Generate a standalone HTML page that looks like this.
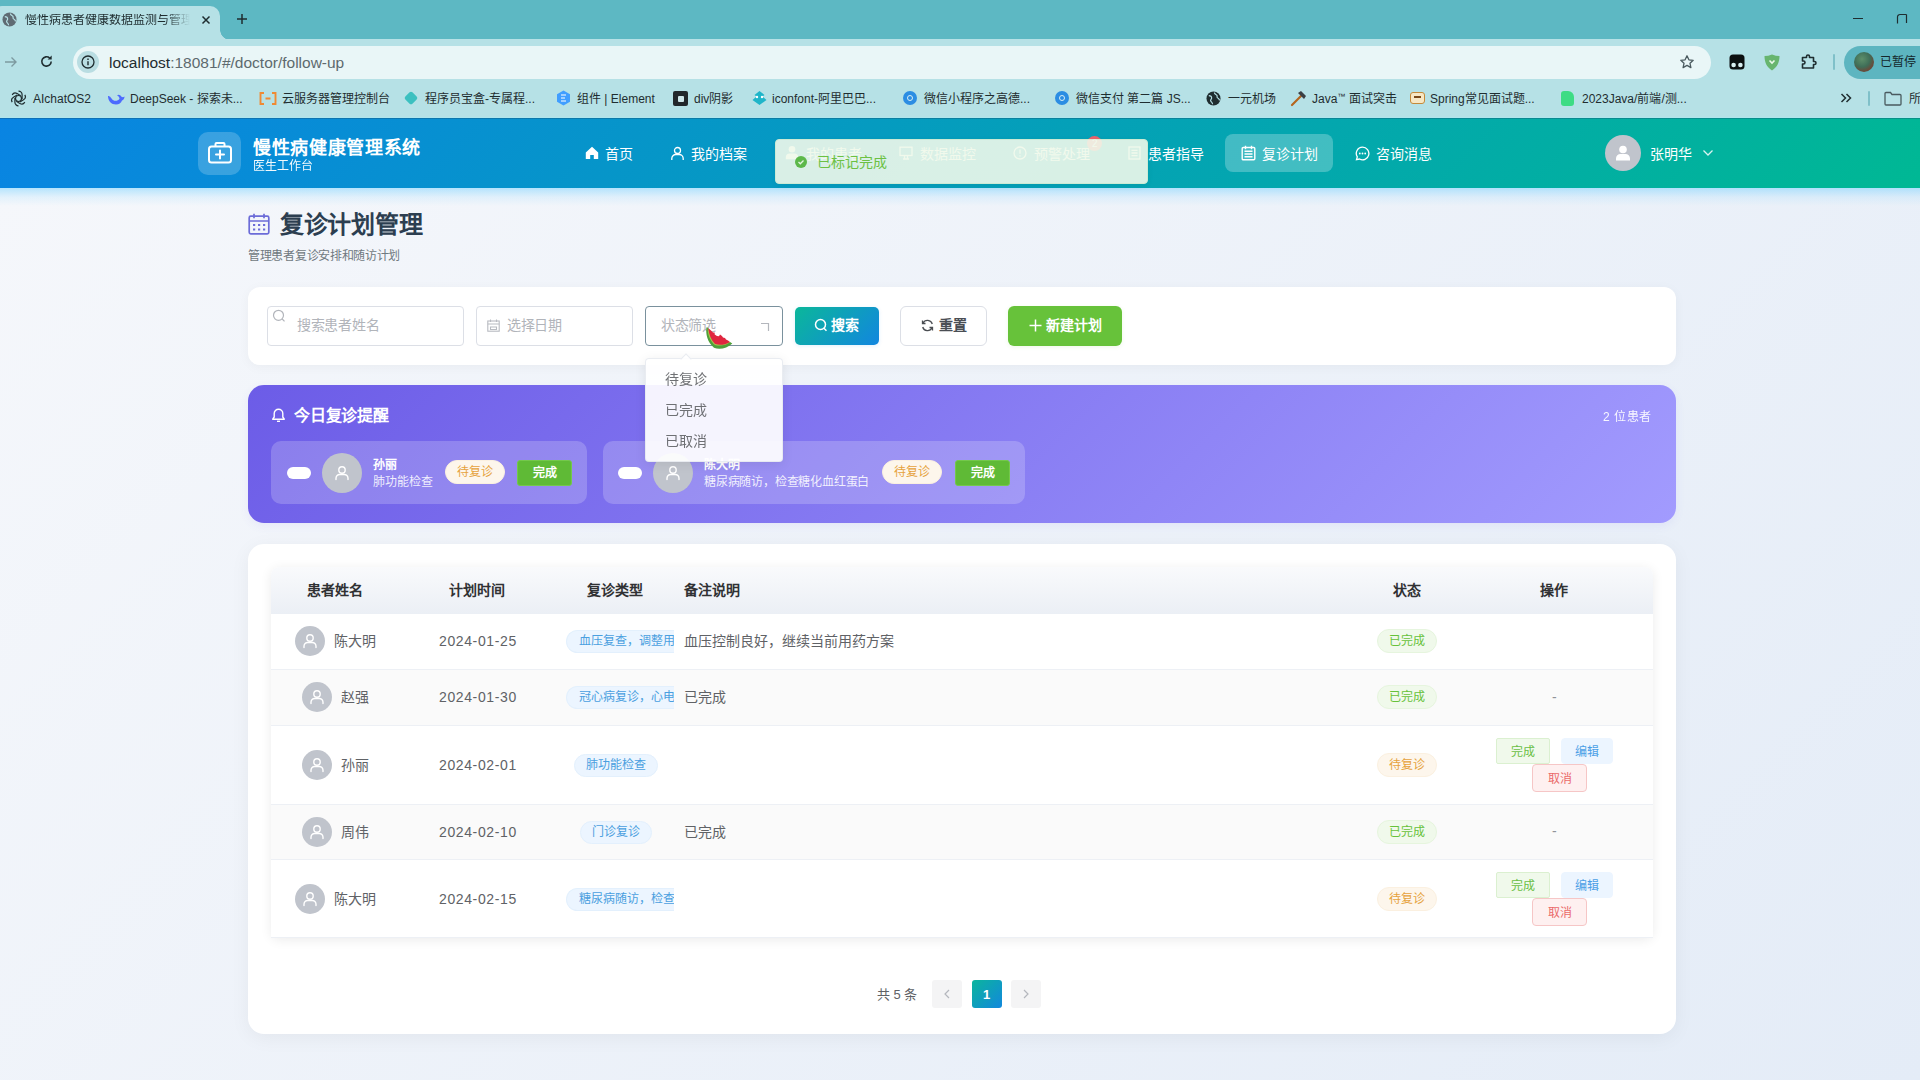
<!DOCTYPE html>
<html lang="zh-CN">
<head>
<meta charset="utf-8">
<title>慢性病患者健康数据监测与管理</title>
<style>
*{box-sizing:border-box;margin:0;padding:0}
html,body{width:1920px;height:1080px;overflow:hidden}
body{font-family:"Liberation Sans",sans-serif;position:relative;background:#eef2f9;color:#303133;font-size:14px}
.abs{position:absolute}
.t{position:absolute;white-space:nowrap;line-height:1}
svg{display:block}
/* browser chrome */
#tabbar{left:0;top:0;width:1920px;height:39px;background:#5db8c3}
#tab{left:-8px;top:6px;width:228px;height:34px;background:#b6e1e6;border-radius:10px 10px 0 0}
#tab:after{content:"";position:absolute;right:-10px;bottom:0;width:10px;height:10px;background:radial-gradient(circle at 100% 0,transparent 9.5px,#b6e1e6 10px)}
#toolbar{left:0;top:39px;width:1920px;height:79px;background:#b6e1e6;border-bottom:1px solid #aee6ee}
#urlbar{left:73px;top:46px;width:1638px;height:33px;border-radius:17px;background:#e9f6f7}
.bm{position:absolute;top:92px;font-size:12px;color:#1f2d30;white-space:nowrap;line-height:15px}
.bmi{position:absolute;top:91px;width:15px;height:15px;border-radius:50%}
/* app header */
#hdr{left:0;top:118px;width:1920px;height:70px;background:linear-gradient(135deg,#0984e3 0%,#00b894 100%);border-top:1px solid rgba(30,70,110,.35)}
.nav{position:absolute;top:147px;font-size:14px;color:#fff;white-space:nowrap;line-height:15px}

/* page */
#pagebg{left:0;top:188px;width:1920px;height:892px;background:linear-gradient(135deg,#f5f7fb 0%,#e4ecf7 100%)}
.card{position:absolute;background:#fff;box-shadow:0 2px 12px rgba(0,0,0,.04)}
.inp{position:absolute;top:306px;height:40px;border:1px solid #dcdfe6;border-radius:4px;background:#fff}
.ph{position:absolute;white-space:nowrap;line-height:16px;top:317px;font-size:14px;color:#b1b4ba}
.btn{position:absolute;white-space:nowrap;text-align:center}
.ritem{position:absolute;top:441px;height:63px;border-radius:10px;background:rgba(255,255,255,.2)}
.pill{position:absolute;width:24px;height:12px;border-radius:6px;background:#fff;top:467px}
.av{position:absolute;border-radius:50%;background:#c0c4cc}
.tag{position:absolute;height:24px;line-height:22px;font-size:12px;border-radius:12px;text-align:center;white-space:nowrap;border:1px solid}
.tag.w{background:#fdf6ec;border-color:#fbf0e0;color:#e6a23c}
.tag.s{background:#f0f9eb;border-color:#e6f5de;color:#67c23a}
.tag.p{background:#ecf5ff;border-color:#e3f0fd;color:#4a9fe0;overflow:hidden;text-align:left;padding-left:12px}
.th{position:absolute;top:582px;width:120px;text-align:center;font-size:14px;font-weight:bold;color:#303133;white-space:nowrap;line-height:16px}
.row{position:absolute;left:271px;width:1382px;border-bottom:1px solid #edf0f5;background:#fff}
.row.alt{background:#fafafa}
.nm{position:absolute;font-size:14px;color:#606266;white-space:nowrap;line-height:16px}
.dt{position:absolute;left:439px;font-size:14px;color:#606266;white-space:nowrap;line-height:16px;letter-spacing:.62px}
.ab{position:absolute;height:26px;line-height:26px;font-size:12px;border-radius:4px;text-align:center;border:1px solid;white-space:nowrap}
.ab.g{background:#f0f9eb;border-color:#dbf0d0;color:#6abf45;width:54px;border-radius:2px}
.ab.b{background:#ecf5ff;border-color:#ecf5ff;color:#4a9fe6;width:52px}
.ab.r{background:#fef0f0;border-color:#f6c6c6;color:#ea6a6a;width:55px}
.opt{position:absolute;left:665px;font-size:14px;color:#606266;white-space:nowrap;line-height:16px}
</style>
</head>
<body>
<div class="abs" id="pagebg"></div>
<div class="abs" style="left:0;top:188px;width:1920px;height:18px;background:linear-gradient(180deg,rgba(120,210,255,.5) 0%,rgba(140,215,255,.18) 50%,rgba(160,220,255,0) 100%)"></div>
<!-- ===== Browser chrome ===== -->
<div class="abs" id="tabbar"></div>
<div class="abs" id="tab"></div>
<div class="abs" id="toolbar"></div>
<div class="abs" id="urlbar"></div>

<!-- tab content -->
<svg class="abs" style="left:2px;top:12px" width="15" height="15" viewBox="0 0 16 16"><circle cx="8" cy="8" r="7.5" fill="#5f6b73"/><path d="M3 5c2 0 3 1 3 2.5S4.5 9 5 10.5 7 12 7 14M9 1.5c0 2 1.500 2 2.500 3S11 7 12.500 7.500 14 9 14.500 10" stroke="#b6e1e6" stroke-width="1.300" fill="none"/></svg>
<div class="t" style="left:25px;top:14px;font-size:12px;color:#1f2d30;width:165px;overflow:hidden;-webkit-mask-image:linear-gradient(90deg,#000 85%,transparent)">慢性病患者健康数据监测与管理系统</div>
<svg class="abs" style="left:201px;top:15px" width="10" height="10" viewBox="0 0 10 10"><path d="M1.500 1.500l7 7M8.500 1.500l-7 7" stroke="#1f2d30" stroke-width="1.500"/></svg>
<svg class="abs" style="left:236px;top:13px" width="12" height="12" viewBox="0 0 12 12"><path d="M6 1v10M1 6h10" stroke="#1f2d30" stroke-width="1.500"/></svg>
<!-- window controls -->
<div class="abs" style="left:1853px;top:18px;width:10px;height:1px;background:#1f2d30"></div>
<svg class="abs" style="left:1896px;top:13px" width="12" height="12" viewBox="0 0 12 12"><path d="M1.500 10.500V4a2.500 2.500 0 0 1 2.500-2.500h6.500M10.500 1.500V10" stroke="#1f2d30" stroke-width="1.200" fill="none"/></svg>
<!-- toolbar icons -->
<svg class="abs" style="left:4px;top:55px" width="14" height="14" viewBox="0 0 14 14"><path d="M1 7h11M7.500 2.500L12 7l-4.500 4.500" stroke="#7d9aa0" stroke-width="1.400" fill="none"/></svg>
<svg class="abs" style="left:39px;top:54px" width="15" height="15" viewBox="0 0 16 16"><path d="M13 8a5 5 0 1 1-1.600-3.700" stroke="#1f2d30" stroke-width="1.700" fill="none"/><path d="M13.500 1.500v4.300H9.200z" fill="#1f2d30"/></svg>
<div class="abs" style="left:77px;top:51px;width:22px;height:22px;border-radius:50%;background:#b9dde2"></div>
<svg class="abs" style="left:81px;top:55px" width="14" height="14" viewBox="0 0 14 14"><circle cx="7" cy="7" r="6" stroke="#1f2d30" stroke-width="1.300" fill="none"/><path d="M7 6.200v4M7 3.600v1.300" stroke="#1f2d30" stroke-width="1.400"/></svg>
<div class="t" id="url" style="left:109px;top:55px;font-size:15.500px;color:#5d6a6e;letter-spacing:0"><span style="color:#1f2d30">localhost</span>:18081/#/doctor/follow-up</div>
<svg class="abs" style="left:1679px;top:54px" width="16" height="16" viewBox="0 0 16 16"><path d="M8 1.800l1.900 4 4.300.500-3.200 3 .900 4.300L8 11.400l-3.900 2.200.900-4.300-3.200-3 4.300-.500z" stroke="#4a5a5f" stroke-width="1.300" fill="none" stroke-linejoin="round"/></svg>
<svg class="abs" style="left:1729px;top:54px" width="16" height="16" viewBox="0 0 16 16"><rect x=".5" y=".5" width="15" height="15" rx="3.500" fill="#0b0f10"/><circle cx="4.600" cy="11" r="2.300" fill="#d8eef0"/><circle cx="11.400" cy="11" r="2.300" fill="#d8eef0"/></svg>
<svg class="abs" style="left:1764px;top:54px" width="16" height="17" viewBox="0 0 16 17"><path d="M8 .5c2.500 1 5 1.500 7.500 1.500 0 6-2 11-7.500 14.500C2.500 13 .5 8 .5 2 3 2 5.500 1.500 8 .5z" fill="#67b56f"/><path d="M5.500 6.500L8 9l2.500-2.500" stroke="#e9f8ea" stroke-width="1.600" fill="none"/></svg>
<svg class="abs" style="left:1800px;top:53px" width="17" height="17" viewBox="0 0 17 17"><path d="M2.500 4.500h4v-1a1.500 1.500 0 0 1 3 0v1h4v4h1a1.500 1.500 0 0 1 0 3h-1v3.500h-11V11h1a1.500 1.500 0 0 0 0-3h-1z" stroke="#1f2d30" stroke-width="1.600" fill="none" stroke-linejoin="round"/></svg>
<div class="abs" style="left:1833px;top:54px;width:2px;height:16px;background:#7fc0c9;border-radius:1px"></div>
<div class="abs" style="left:1844px;top:46px;width:100px;height:33px;border-radius:17px;background:#5db5c0"></div>
<div class="abs" style="left:1854px;top:52px;width:20px;height:20px;border-radius:50%;background:radial-gradient(circle at 40% 35%,#5d8f6a 0,#3f6e58 45%,#6a4a3a 70%,#2f5d55 100%)"></div>
<div class="t" style="left:1880px;top:56px;font-size:12px;color:#14282c">已暂停</div>
<!-- bookmarks -->
<svg class="abs" style="left:10px;top:90px" width="17" height="17" viewBox="0 0 17 17"><g fill="none" stroke="#1f2d30" stroke-width="1.200"><circle cx="8.500" cy="8.500" r="3"/><path d="M8.500 1.200a3.600 3.600 0 0 1 3.600 3.600v4.200M14.800 4.900a3.600 3.600 0 0 1-1.300 4.900l-3.600 2.100M14.800 12.100a3.600 3.600 0 0 1-4.900 1.300L6.300 11.300M8.500 15.800a3.600 3.600 0 0 1-3.600-3.600V8M2.200 12.100a3.600 3.600 0 0 1 1.300-4.900l3.600-2.100M2.200 4.900a3.600 3.600 0 0 1 4.900-1.300l3.600 2.100"/></g></svg>
<div class="bm" style="left:33px">AIchatOS2</div>
<svg class="abs" style="left:107px;top:91px" width="18" height="15" viewBox="0 0 18 15"><path d="M1 5c0 5 3.500 8.500 8 8.500 3 0 5-1.500 6-4 1.500-.5 2.500-2 2.500-4-1 .800-2 .800-3 .300-1-2-3-2.500-4.500-1.500 1.500.700 2.500 2 2.500 3.500C11 10 8 10.500 6 9 4 7.500 3.500 5 1 5z" fill="#4d6bfe"/></svg>
<div class="bm" style="left:130px">DeepSeek - 探索未...</div>
<svg class="abs" style="left:259px;top:92px" width="18" height="13" viewBox="0 0 18 13"><path d="M5 1H1.500v11H5M13 1h3.500v11H13M6.500 6.500h5" stroke="#f08a33" stroke-width="1.900" fill="none"/></svg>
<div class="bm" style="left:282px">云服务器管理控制台</div>
<div class="abs" style="left:406px;top:93px;width:10px;height:10px;background:#3cc0c0;transform:rotate(45deg);border-radius:2px"></div>
<div class="bm" style="left:425px">程序员宝盒-专属程...</div>
<svg class="abs" style="left:556px;top:90px" width="15" height="16" viewBox="0 0 15 16"><path d="M7.500 .5l6.500 3.700v7.600L7.500 15.500 1 11.800V4.200z" fill="#409eff"/><path d="M5 5h5M5 8h4M5 11h5" stroke="#fff" stroke-width="1.200"/></svg>
<div class="bm" style="left:577px">组件 | Element</div>
<div class="abs" style="left:673px;top:91px;width:15px;height:15px;background:#22272b;border-radius:2px"></div>
<div class="abs" style="left:678px;top:96px;width:6px;height:6px;background:#cfe6e9;border-radius:1px"></div>
<div class="bm" style="left:694px">div阴影</div>
<svg class="abs" style="left:751px;top:90px" width="17" height="16" viewBox="0 0 17 16"><path d="M8.500 1l5 4-2 1.500 4 3.500-7 5-7-5 4-3.500L3.500 5z" fill="#1fb5c9"/><circle cx="6" cy="7" r="1.200" fill="#fff"/><circle cx="11" cy="7" r="1.200" fill="#fff"/></svg>
<div class="bm" style="left:772px">iconfont-阿里巴巴...</div>
<div class="abs" style="left:903px;top:91px;width:14px;height:14px;border-radius:50%;background:#2b8de3"></div>
<div class="abs" style="left:907px;top:95px;width:6px;height:6px;border-radius:50%;border:1.500px solid #d8eef5"></div>
<div class="bm" style="left:924px">微信小程序之高德...</div>
<div class="abs" style="left:1055px;top:91px;width:14px;height:14px;border-radius:50%;background:#2b8de3"></div>
<div class="abs" style="left:1059px;top:95px;width:6px;height:6px;border-radius:50%;border:1.500px solid #d8eef5"></div>
<div class="bm" style="left:1076px">微信支付 第二篇 JS...</div>
<svg class="abs" style="left:1206px;top:91px" width="15" height="15" viewBox="0 0 16 16"><circle cx="8" cy="8" r="7.500" fill="#1f2d30"/><path d="M3 5c2 0 3 1 3 2.500S4.500 9 5 10.500 7 12 7 14M9 1.500c0 2 1.500 2 2.500 3S11 7 12.500 7.500 14 9 14.500 10" stroke="#b6e1e6" stroke-width="1.300" fill="none"/></svg>
<div class="bm" style="left:1228px">一元机场</div>
<svg class="abs" style="left:1290px;top:90px" width="17" height="17" viewBox="0 0 17 17"><path d="M2 15L11 6" stroke="#b5651d" stroke-width="2.200" stroke-linecap="round"/><path d="M8 3l3-2 5 5-2 3z" fill="#3a3f44"/></svg>
<div class="bm" style="left:1312px">Java<span style="font-size:8px;position:relative;top:-4px">™</span> 面试突击</div>
<div class="abs" style="left:1410px;top:92px;width:15px;height:12px;border-radius:3px;background:#f7e7c4;border:1.500px solid #c48a3a"></div>
<div class="abs" style="left:1414px;top:96px;width:7px;height:2px;background:#7a4a1a"></div>
<div class="bm" style="left:1430px">Spring常见面试题...</div>
<div class="abs" style="left:1561px;top:91px;width:13px;height:15px;border-radius:3px 6px 3px 3px;background:#3ddc84"></div>
<div class="bm" style="left:1582px">2023Java/前端/测...</div>
<svg class="abs" style="left:1840px;top:93px" width="12" height="10" viewBox="0 0 12 10"><path d="M1.500 1l4 4-4 4M6.500 1l4 4-4 4" stroke="#1f2d30" stroke-width="1.500" fill="none"/></svg>
<div class="abs" style="left:1868px;top:91px;width:2px;height:15px;background:#7fc0c9;border-radius:1px"></div>
<svg class="abs" style="left:1884px;top:91px" width="18" height="15" viewBox="0 0 18 15"><path d="M1 2.500a1 1 0 0 1 1-1h4.500l1.500 2H16a1 1 0 0 1 1 1V13a1 1 0 0 1-1 1H2a1 1 0 0 1-1-1z" stroke="#4a5a5f" stroke-width="1.300" fill="none"/></svg>
<div class="bm" style="left:1909px">所</div>
<!-- ===== App header ===== -->
<div class="abs" id="hdr"></div>

<!-- logo -->
<div class="abs" style="left:198px;top:131.500px;width:43px;height:43px;border-radius:10px;background:rgba(255,255,255,.2)"></div>
<svg class="abs" style="left:207px;top:141px" width="26" height="24" viewBox="0 0 26 24"><g fill="none" stroke="#fff" stroke-width="2" stroke-linejoin="round"><rect x="2" y="5.500" width="22" height="16" rx="2.500"/><path d="M8.500 5.500V3a1 1 0 0 1 1-1h7a1 1 0 0 1 1 1v2.500"/><path d="M13 9.500v8M9 13.500h8" stroke-linecap="round"/></g></svg>
<div class="t" style="left:253px;top:139px;font-size:18px;font-weight:bold;color:#fff;letter-spacing:.65px">慢性病健康管理系统</div>
<div class="t" style="left:253px;top:160px;font-size:12px;color:#fff;opacity:.95">医生工作台</div>
<!-- nav -->
<svg class="abs" style="left:585px;top:146px" width="14" height="14" viewBox="0 0 14 14"><path d="M7 .8L.8 6.500V13h4.400V9h3.600v4h4.400V6.500z" fill="#fff"/></svg>
<div class="nav" style="left:605px">首页</div>
<svg class="abs" style="left:670px;top:146px" width="15" height="15" viewBox="0 0 15 15"><g fill="none" stroke="#fff" stroke-width="1.300"><circle cx="7.500" cy="4.500" r="3"/><path d="M1.800 14v-1.500a4 4 0 0 1 4-4h3.400a4 4 0 0 1 4 4V14"/></g></svg>
<div class="nav" style="left:691px">我的档案</div>
<svg class="abs" style="left:785px;top:145px" width="14" height="15" viewBox="0 0 14 15"><g fill="#fff"><circle cx="7" cy="4.300" r="3.300"/><path d="M.8 14.200v-1.700a4 4 0 0 1 4-4h4.400a4 4 0 0 1 4 4v1.700z"/></g></svg>
<div class="nav" style="left:806px">我的患者</div>
<svg class="abs" style="left:899px;top:146px" width="14" height="14" viewBox="0 0 14 14"><g fill="none" stroke="#fff" stroke-width="1.300"><rect x="1" y="1.200" width="12" height="8.300"/><path d="M4 13h6M5.500 9.500V13M8.500 9.500V13"/></g></svg>
<div class="nav" style="left:920px">数据监控</div>
<svg class="abs" style="left:1013px;top:146px" width="14" height="14" viewBox="0 0 14 14"><g fill="none" stroke="#fff" stroke-width="1.300"><circle cx="7" cy="7" r="6"/><path d="M7 3.500v4.300M7 9.300v1.300"/></g></svg>
<div class="nav" style="left:1034px">预警处理</div>
<div class="abs" style="left:1087px;top:136px;width:15px;height:15px;border-radius:8px;background:#e9626a"></div>
<div class="t" style="left:1092px;top:139px;font-size:10px;color:#fff">2</div>
<svg class="abs" style="left:1128px;top:146px" width="13" height="14" viewBox="0 0 13 14"><g fill="none" stroke="#fff" stroke-width="1.300"><rect x="1" y="1" width="11" height="12"/><path d="M3.500 4.300h6M3.500 7h6M3.500 9.700h6"/></g></svg>
<div class="nav" style="left:1148px">患者指导</div>
<div class="abs" style="left:1225px;top:134px;width:108px;height:38px;border-radius:8px;background:rgba(255,255,255,.25)"></div>
<svg class="abs" style="left:1241px;top:145px" width="15" height="16" viewBox="0 0 15 16"><g fill="none" stroke="#fff" stroke-width="1.400"><rect x="1.200" y="2.500" width="12.600" height="12.300" rx="1"/><path d="M4.500 .8v3.400M10.500 .8v3.400M3.500 6.300h8M3.500 9h8M3.500 11.700h8"/></g></svg>
<div class="nav" style="left:1262px">复诊计划</div>
<svg class="abs" style="left:1355px;top:146px" width="15" height="15" viewBox="0 0 15 15"><g fill="none" stroke="#fff" stroke-width="1.300"><path d="M7.500 1.200a6.300 6.300 0 1 1-3 11.800L1.500 13.700l.8-2.800A6.300 6.300 0 0 1 7.500 1.200z"/></g><g fill="#fff"><circle cx="4.800" cy="7.500" r=".9"/><circle cx="7.500" cy="7.500" r=".9"/><circle cx="10.200" cy="7.500" r=".9"/></g></svg>
<div class="nav" style="left:1376px">咨询消息</div>
<!-- user -->
<div class="abs" style="left:1605px;top:135px;width:36px;height:36px;border-radius:50%;background:#c0c4cc"></div>
<svg class="abs" style="left:1614px;top:144px" width="18" height="18" viewBox="0 0 18 18"><g fill="#fff"><circle cx="9" cy="5.500" r="3.800"/><path d="M2 16.500v-2a4.500 4.500 0 0 1 4.500-4.500h5a4.500 4.500 0 0 1 4.500 4.500v2z"/></g></svg>
<div class="nav" style="left:1650px">张明华</div>
<svg class="abs" style="left:1702px;top:149px" width="12" height="8" viewBox="0 0 12 8"><path d="M1.500 1.500L6 6l4.500-4.500" stroke="#fff" stroke-width="1.300" fill="none" opacity=".85"/></svg>
<!-- toast -->
<div class="abs" style="left:775px;top:139px;width:373px;height:45px;border-radius:4px;background:#f0f9eb;border:1px solid #e1f3d8;opacity:.9;box-shadow:0 2px 8px rgba(0,0,0,.06)"></div>
<div class="abs" style="left:795px;top:156px;width:12px;height:12px;border-radius:50%;background:#5cb84a"></div>
<svg class="abs" style="left:797px;top:158px" width="8" height="8" viewBox="0 0 8 8"><path d="M1.500 4l1.800 1.800L6.500 2.500" stroke="#e4f5e2" stroke-width="1.300" fill="none"/></svg>
<div class="t" style="left:817px;top:155px;font-size:14px;color:#6cc143">已标记完成</div>
<!-- ===== Page ===== -->
<svg class="abs" style="left:248px;top:213px" width="22" height="22" viewBox="0 0 22 22"><g fill="none" stroke="#6c6cd8" stroke-width="1.700"><rect x="1.200" y="3.200" width="19.600" height="17.600" rx="1.500"/><path d="M1.200 8h19.600M6 .8v4.400M16 .8v4.400"/></g><g fill="#6c6cd8"><rect x="5" y="11" width="2.200" height="2"/><rect x="10" y="11" width="2.200" height="2"/><rect x="15" y="11" width="2.200" height="2"/><rect x="5" y="15.500" width="2.200" height="2"/><rect x="10" y="15.500" width="2.200" height="2"/><rect x="15" y="15.500" width="2.200" height="2"/></g></svg>
<div class="t" style="left:280px;top:213px;font-size:24px;font-weight:bold;color:#2c3e50;letter-spacing:-.3px">复诊计划管理</div>
<div class="t" style="left:248px;top:250px;font-size:12px;color:#707980;letter-spacing:-.3px">管理患者复诊安排和随访计划</div>
<div class="card" style="left:248px;top:287px;width:1428px;height:78px;border-radius:12px"></div>
<div class="inp" style="left:267px;width:197px"></div>
<svg class="abs" style="left:272px;top:309px" width="14" height="14" viewBox="0 0 14 14"><g fill="none" stroke="#b2b5bb" stroke-width="1.200"><circle cx="6.500" cy="6.300" r="5"/><path d="M10.200 10l2.300 2.300"/></g></svg>
<div class="ph" style="left:297px;letter-spacing:-.3px">搜索患者姓名</div>
<div class="inp" style="left:476px;width:157px"></div>
<svg class="abs" style="left:487px;top:319px" width="13" height="13" viewBox="0 0 13 13"><g fill="none" stroke="#b8bbc1" stroke-width="1.100"><rect x=".8" y="2" width="11.400" height="10.200"/><path d="M.8 5h11.400M3.500 .5v2.500M9.500 .5v2.500M3.500 8h6v2.500h-6z"/></g></svg>
<div class="ph" style="left:507px;letter-spacing:-.4px">选择日期</div>
<div class="inp" style="left:645px;width:138px;border-color:#7a919d"></div>
<div class="ph" style="left:661px;letter-spacing:-.4px">状态筛选</div>
<svg class="abs" style="left:760px;top:322px" width="10" height="10" viewBox="0 0 10 10"><path d="M1 1.500h7.500V9" stroke="#b4b7bd" stroke-width="1.200" fill="none"/></svg>
<div class="btn" style="left:795px;top:307px;width:84px;height:38px;border-radius:5px;background:linear-gradient(135deg,#0bb79a 0%,#1286df 100%);box-shadow:0 1px 4px rgba(9,132,227,.12)"></div>
<svg class="abs" style="left:814px;top:318px" width="14" height="14" viewBox="0 0 14 14"><g fill="none" stroke="#fff" stroke-width="1.500"><circle cx="6.500" cy="6.500" r="5"/><path d="M10 10.200l2.500 2.500"/></g></svg>
<div class="t" style="left:831px;top:318px;font-size:14px;font-weight:bold;color:#fff">搜索</div>
<div class="btn" style="left:900px;top:306px;width:87px;height:40px;border-radius:6px;border:1px solid #dcdfe6;background:#fff"></div>
<svg class="abs" style="left:921px;top:319px" width="13" height="13" viewBox="0 0 13 13"><g fill="none" stroke="#4a4d52" stroke-width="1.300"><path d="M11.300 5a5 5 0 0 0-9.300-.8M1.700 8a5 5 0 0 0 9.300.8"/><path d="M1.500 1.500v3h3M11.500 11.500v-3h-3"/></g></svg>
<div class="t" style="left:939px;top:318px;font-size:14px;font-weight:bold;color:#4a4e54">重置</div>
<div class="btn" style="left:1008px;top:306px;width:114px;height:40px;border-radius:6px;background:#67c23a;box-shadow:0 1px 4px rgba(103,194,58,.12)"></div>
<svg class="abs" style="left:1029px;top:319px" width="13" height="13" viewBox="0 0 13 13"><path d="M6.500 .5v12M.5 6.500h12" stroke="#fff" stroke-width="1.500"/></svg>
<div class="t" style="left:1046px;top:318px;font-size:14px;font-weight:bold;color:#fff">新建计划</div>
<div class="abs" style="left:248px;top:385px;width:1428px;height:138px;border-radius:16px;background:linear-gradient(135deg,#6c5ce7 0%,#a29bfe 100%);box-shadow:0 3px 10px rgba(108,92,231,.08)"></div>
<svg class="abs" style="left:271px;top:408px" width="15" height="15" viewBox="0 0 15 15"><g fill="none" stroke="#fff" stroke-width="1.400" stroke-linejoin="round"><path d="M7.500 1.200a4.300 4.300 0 0 1 4.300 4.300v3.500l1.500 2.200H1.700l1.500-2.200V5.500a4.300 4.300 0 0 1 4.300-4.300z"/><path d="M6 13.300h3"/></g></svg>
<div class="t" style="left:294px;top:408px;font-size:16px;font-weight:bold;color:#fff;letter-spacing:-.2px">今日复诊提醒</div>
<div class="t" style="left:1603px;top:411px;font-size:12px;color:#fff;opacity:.92;letter-spacing:.5px">2 位患者</div>
<div class="ritem" style="left:271px;width:316px"></div>
<div class="pill" style="left:287px"></div>
<div class="av" style="left:322px;top:452.5px;width:40px;height:40px"></div><svg class="abs" style="left:334.0px;top:464.5px" width="16" height="16" viewBox="0 0 16 16"><g fill="none" stroke="#fff" stroke-width="1.400" stroke-linecap="round"><circle cx="8" cy="5" r="3.200"/><path d="M2 14.500v-1.300a3.700 3.700 0 0 1 3.700-3.700h4.600a3.700 3.700 0 0 1 3.700 3.700v1.300"/></g></svg>
<div class="t" style="left:373px;top:459px;font-size:12px;font-weight:bold;color:#fff">孙丽</div>
<div class="t" style="left:373px;top:476px;font-size:12px;color:rgba(255,255,255,.88)">肺功能检查</div>
<div class="tag w" style="left:445px;top:460px;width:60px">待复诊</div>
<div class="btn" style="left:517px;top:459.500px;width:55px;height:26px;line-height:24px;border-radius:3px;background:#5fba36;border:1px solid #74c84c;font-size:12px;font-weight:bold;color:#fff">完成</div>
<div class="ritem" style="left:603px;width:422px"></div>
<div class="pill" style="left:618px"></div>
<div class="av" style="left:653px;top:452.5px;width:40px;height:40px"></div><svg class="abs" style="left:665.0px;top:464.5px" width="16" height="16" viewBox="0 0 16 16"><g fill="none" stroke="#fff" stroke-width="1.400" stroke-linecap="round"><circle cx="8" cy="5" r="3.200"/><path d="M2 14.500v-1.300a3.700 3.700 0 0 1 3.700-3.700h4.600a3.700 3.700 0 0 1 3.700 3.700v1.300"/></g></svg>
<div class="t" style="left:704px;top:459px;font-size:12px;font-weight:bold;color:#fff">陈大明</div>
<div class="t" style="left:704px;top:476px;font-size:12px;color:rgba(255,255,255,.88);letter-spacing:-.2px">糖尿病随访，检查糖化血红蛋白</div>
<div class="tag w" style="left:882px;top:460px;width:60px">待复诊</div>
<div class="btn" style="left:955px;top:459.500px;width:55px;height:26px;line-height:24px;border-radius:3px;background:#5fba36;border:1px solid #74c84c;font-size:12px;font-weight:bold;color:#fff">完成</div>
<div class="card" style="left:248px;top:544px;width:1428px;height:490px;border-radius:16px;box-shadow:0 4px 20px rgba(0,0,0,.05)"></div>
<div class="abs" style="left:271px;top:567px;width:1382px;height:371px;border-radius:8px;box-shadow:0 2px 12px rgba(0,0,0,.08);background:#fff"></div>
<div class="abs" style="left:271px;top:567px;width:1382px;height:47px;border-radius:8px 8px 0 0;background:linear-gradient(180deg,#f9fafc 0%,#ebeff5 100%)"></div>
<div class="th" style="left:275px">患者姓名</div>
<div class="th" style="left:417px">计划时间</div>
<div class="th" style="left:555px">复诊类型</div>
<div class="th" style="left:684px;text-align:left">备注说明</div>
<div class="th" style="left:1347px">状态</div>
<div class="th" style="left:1494px">操作</div>
<div class="row" style="top:614px;height:56px"></div>
<div class="av" style="left:295px;top:626px;width:30px;height:30px"></div><svg class="abs" style="left:302.0px;top:633.0px" width="16" height="16" viewBox="0 0 16 16"><g fill="none" stroke="#fff" stroke-width="1.400" stroke-linecap="round"><circle cx="8" cy="5" r="3.200"/><path d="M2 14.500v-1.300a3.700 3.700 0 0 1 3.700-3.700h4.600a3.700 3.700 0 0 1 3.700 3.700v1.300"/></g></svg>
<div class="nm" style="left:334px;top:633px">陈大明</div>
<div class="dt" style="top:633px">2024-01-25</div>
<div class="tag p" style="left:566px;top:630px;height:23px;line-height:21px;width:108px;border-radius:12px 0 0 12px;border-right:0;">血压复查，调整用药</div>
<div class="nm" style="left:684px;top:633px">血压控制良好，继续当前用药方案</div>
<div class="tag s" style="left:1377px;top:629px;width:60px">已完成</div>
<div class="row alt" style="top:670px;height:56px"></div>
<div class="av" style="left:302px;top:682px;width:30px;height:30px"></div><svg class="abs" style="left:309.0px;top:689.0px" width="16" height="16" viewBox="0 0 16 16"><g fill="none" stroke="#fff" stroke-width="1.400" stroke-linecap="round"><circle cx="8" cy="5" r="3.200"/><path d="M2 14.500v-1.300a3.700 3.700 0 0 1 3.700-3.700h4.600a3.700 3.700 0 0 1 3.700 3.700v1.300"/></g></svg>
<div class="nm" style="left:341px;top:689px">赵强</div>
<div class="dt" style="top:689px">2024-01-30</div>
<div class="tag p" style="left:566px;top:686px;height:23px;line-height:21px;width:108px;border-radius:12px 0 0 12px;border-right:0;">冠心病复诊，心电图</div>
<div class="nm" style="left:684px;top:689px">已完成</div>
<div class="tag s" style="left:1377px;top:685px;width:60px">已完成</div>
<div class="nm" style="left:1552px;top:688.5px;color:#909399">-</div>
<div class="row" style="top:726px;height:79px"></div>
<div class="av" style="left:302px;top:749.5px;width:30px;height:30px"></div><svg class="abs" style="left:309.0px;top:756.5px" width="16" height="16" viewBox="0 0 16 16"><g fill="none" stroke="#fff" stroke-width="1.400" stroke-linecap="round"><circle cx="8" cy="5" r="3.200"/><path d="M2 14.500v-1.300a3.700 3.700 0 0 1 3.700-3.700h4.600a3.700 3.700 0 0 1 3.700 3.700v1.300"/></g></svg>
<div class="nm" style="left:341px;top:756.5px">孙丽</div>
<div class="dt" style="top:756.5px">2024-02-01</div>
<div class="tag p" style="left:574px;top:753.5px;height:23px;line-height:21px;width:84px;text-align:center;padding-left:0;">肺功能检查</div>
<div class="tag w" style="left:1377px;top:752.5px;width:60px">待复诊</div>
<div class="ab g" style="left:1496px;top:738px">完成</div><div class="ab b" style="left:1561px;top:738px">编辑</div><div class="ab r" style="left:1532px;top:764px;height:28px;line-height:28px">取消</div>
<div class="row alt" style="top:805px;height:55px"></div>
<div class="av" style="left:302px;top:816.5px;width:30px;height:30px"></div><svg class="abs" style="left:309.0px;top:823.5px" width="16" height="16" viewBox="0 0 16 16"><g fill="none" stroke="#fff" stroke-width="1.400" stroke-linecap="round"><circle cx="8" cy="5" r="3.200"/><path d="M2 14.500v-1.300a3.700 3.700 0 0 1 3.700-3.700h4.600a3.700 3.700 0 0 1 3.700 3.700v1.300"/></g></svg>
<div class="nm" style="left:341px;top:823.5px">周伟</div>
<div class="dt" style="top:823.5px">2024-02-10</div>
<div class="tag p" style="left:580px;top:820.5px;height:23px;line-height:21px;width:72px;text-align:center;padding-left:0;">门诊复诊</div>
<div class="nm" style="left:684px;top:823.5px">已完成</div>
<div class="tag s" style="left:1377px;top:819.5px;width:60px">已完成</div>
<div class="nm" style="left:1552px;top:823.0px;color:#909399">-</div>
<div class="row" style="top:860px;height:78px"></div>
<div class="av" style="left:295px;top:884px;width:30px;height:30px"></div><svg class="abs" style="left:302.0px;top:891.0px" width="16" height="16" viewBox="0 0 16 16"><g fill="none" stroke="#fff" stroke-width="1.400" stroke-linecap="round"><circle cx="8" cy="5" r="3.200"/><path d="M2 14.500v-1.300a3.700 3.700 0 0 1 3.700-3.700h4.600a3.700 3.700 0 0 1 3.700 3.700v1.300"/></g></svg>
<div class="nm" style="left:334px;top:891px">陈大明</div>
<div class="dt" style="top:891px">2024-02-15</div>
<div class="tag p" style="left:566px;top:888px;height:23px;line-height:21px;width:108px;border-radius:12px 0 0 12px;border-right:0;">糖尿病随访，检查</div>
<div class="tag w" style="left:1377px;top:887px;width:60px">待复诊</div>
<div class="ab g" style="left:1496px;top:872px">完成</div><div class="ab b" style="left:1561px;top:872px">编辑</div><div class="ab r" style="left:1532px;top:898px;height:28px;line-height:28px">取消</div>
<div class="t" style="left:877px;top:987px;font-size:13px;color:#606266;line-height:15px">共 5 条</div>
<div class="abs" style="left:932px;top:980px;width:30px;height:28px;border-radius:3px;background:#f4f4f5"></div>
<svg class="abs" style="left:943px;top:989px" width="8" height="10" viewBox="0 0 8 10"><path d="M6 1L2 5l4 4" stroke="#b4b7bd" stroke-width="1.200" fill="none"/></svg>
<div class="abs" style="left:972px;top:980px;width:30px;height:28px;border-radius:3px;background:linear-gradient(135deg,#0bb59c 0%,#1288dd 100%)"></div>
<div class="t" style="left:983px;top:987px;font-size:13px;font-weight:bold;color:#fff;line-height:15px">1</div>
<div class="abs" style="left:1011px;top:980px;width:30px;height:28px;border-radius:3px;background:#f4f4f5"></div>
<svg class="abs" style="left:1022px;top:989px" width="8" height="10" viewBox="0 0 8 10"><path d="M2 1l4 4-4 4" stroke="#b4b7bd" stroke-width="1.200" fill="none"/></svg>
<div class="abs" style="left:645px;top:358px;width:138px;height:104px;border-radius:4px;background:rgba(255,255,255,.92);border:1px solid rgba(228,231,237,.8);box-shadow:0 2px 12px rgba(0,0,0,.08)"></div>
<div class="abs" style="left:682px;top:354.500px;width:8px;height:8px;background:rgba(255,255,255,.9);transform:rotate(45deg);border-left:1px solid rgba(228,231,237,.8);border-top:1px solid rgba(228,231,237,.8)"></div>
<div class="opt" style="top:371px;opacity:.9">待复诊</div>
<div class="opt" style="top:402px;opacity:.9">已完成</div>
<div class="opt" style="top:433px;opacity:.9">已取消</div>
<!-- cursor (watermelon) -->
<svg class="abs" style="left:705px;top:326px" width="28" height="24" viewBox="0 0 28 24"><path d="M1.600 1.300C.3 8 2.500 16.500 9 21.800c5 2 13 1 18.300-4.300L25 16 10 17 3.200 2z" fill="#4fa03a"/><path d="M2.800 2C2.600 8.500 5 15 10 19c5 1.300 11 .500 15.500-3L10 16z" fill="#a9c94a"/><path d="M3.200 2L6 4.500l2 2 1.600-.1.100 2L12 10l2 .2 1-1.700 2 1.500 1 1.500 2 .5 1 1.500 2 1 2 1.500c-5 3-10.500 3.500-15 2C6 14 3.700 8 3.200 2z" fill="#e0263f"/></svg>
</body>
</html>
